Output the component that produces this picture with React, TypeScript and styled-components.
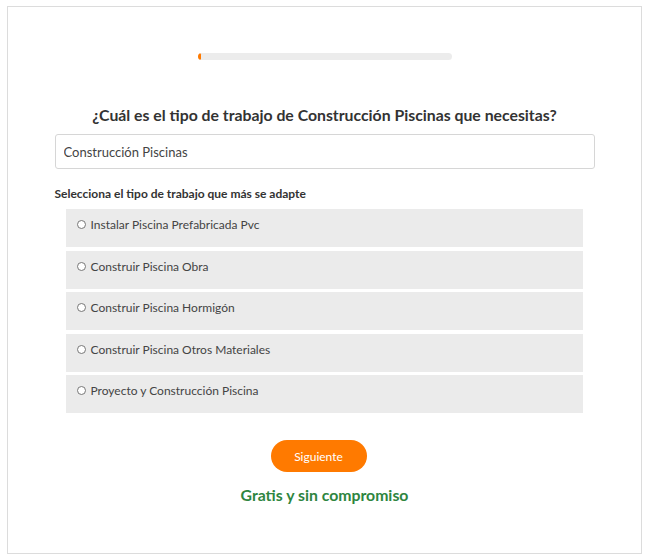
import styled, { createGlobalStyle } from "styled-components";

const GlobalStyle = createGlobalStyle`
  body {
    margin: 0;
    background: #ffffff;
    font-family: Lato, "Noto Sans", Arial, sans-serif;
    color: #333333;
  }
`;

const Frame = styled.div`
  box-sizing: border-box;
  width: 635px;
  height: 548px;
  margin: 6px 0 0 7px;
  border: 1px solid #dcdcdc;
  display: flex;
  flex-direction: column;
  align-items: center;
  padding-top: 46px;
`;

const Progress = styled.div`
  width: 254px;
  height: 7px;
  border-radius: 4px;
  background: #ececec;
  overflow: hidden;
`;

const ProgressFill = styled.div`
  height: 100%;
  background: #ff7a00;
  border-radius: 4px;
`;

const Question = styled.h1`
  margin: 45px 0 0;
  font-size: 15.8px;
  font-weight: 700;
  color: #333333;
  line-height: 20px;
  text-align: center;
`;

const Form = styled.div`
  width: 540px;
  margin-top: 9px;
  display: flex;
  flex-direction: column;
`;

const SearchInput = styled.input`
  box-sizing: border-box;
  width: 100%;
  height: 35px;
  border: 1px solid #d6d6d6;
  border-radius: 3px;
  padding: 0 8px;
  font-family: Lato, "Noto Sans", Arial, sans-serif;
  font-size: 13px;
  color: #444444;
  outline: none;
`;

const Label = styled.div`
  margin-top: 18px;
  font-size: 12px;
  font-weight: 700;
  color: #333333;
  line-height: 14px;
`;

const Options = styled.div`
  width: 517px;
  margin: 8px 0 0 11px;
  display: flex;
  flex-direction: column;
  gap: 3.5px;
`;

const Option = styled.label`
  box-sizing: border-box;
  height: 38px;
  background: #ebebeb;
  display: flex;
  align-items: flex-start;
  padding: 9px 0 0 11px;
  gap: 5px;
  font-size: 12px;
  color: #444444;
  line-height: 14px;
  cursor: pointer;
`;

const Radio = styled.input`
  appearance: none;
  box-sizing: border-box;
  width: 9px;
  height: 9px;
  margin: 2px 0 0;
  border: 1px solid #777777;
  border-radius: 50%;
  background: #ffffff;
`;

const NextButton = styled.button`
  margin: 27px 12px 0 0;
  width: 96px;
  height: 32px;
  border: none;
  border-radius: 16px;
  background: #ff7a00;
  color: #ffffff;
  font-family: Lato, "Noto Sans", Arial, sans-serif;
  font-size: 12px;
  cursor: pointer;
`;

const FreeNote = styled.div`
  margin-top: 14px;
  font-size: 15.8px;
  font-weight: 700;
  color: #2e8540;
  line-height: 18px;
`;

const choices = [
  "Instalar Piscina Prefabricada Pvc",
  "Construir Piscina Obra",
  "Construir Piscina Hormigón",
  "Construir Piscina Otros Materiales",
  "Proyecto y Construcción Piscina",
];

export default function App() {
  return (
    <>
      <GlobalStyle />
      <Frame>
        <Progress>
          <ProgressFill style={{ width: "3px" }} />
        </Progress>
        <Question>¿Cuál es el tipo de trabajo de Construcción Piscinas que necesitas?</Question>
        <Form>
          <SearchInput defaultValue="Construcción Piscinas" />
          <Label>Selecciona el tipo de trabajo que más se adapte</Label>
          <Options>
            {choices.map((c) => (
              <Option key={c}>
                <Radio type="radio" name="tipo" />
                {c}
              </Option>
            ))}
          </Options>
        </Form>
        <NextButton>Siguiente</NextButton>
        <FreeNote>Gratis y sin compromiso</FreeNote>
      </Frame>
    </>
  );
}
